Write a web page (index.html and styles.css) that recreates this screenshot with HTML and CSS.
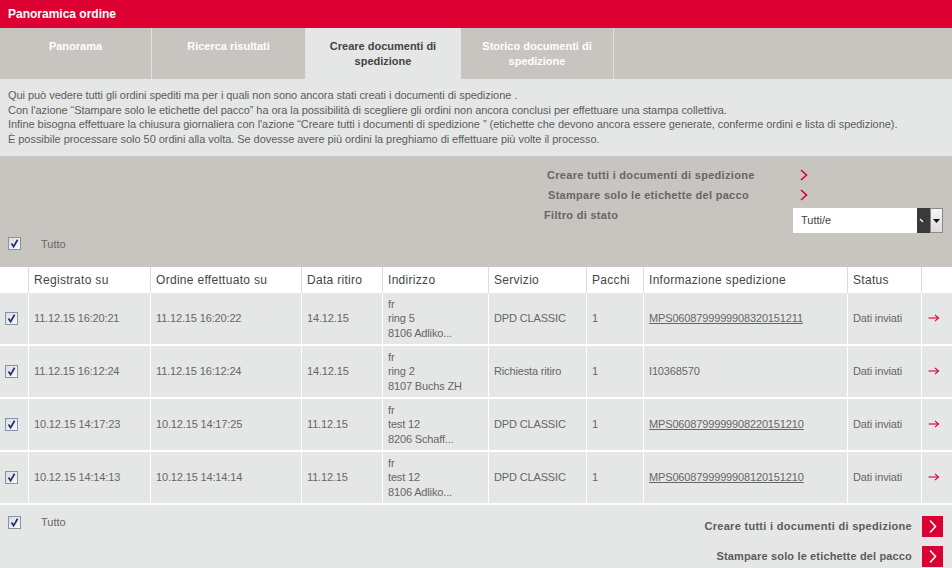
FILE: index.html
```html
<!DOCTYPE html>
<html lang="it">
<head>
<meta charset="utf-8">
<title>Panoramica ordine</title>
<link rel="stylesheet" href="styles.css">
</head>
<body>
<div class="page">
  <header class="titlebar">Panoramica ordine</header>
  <nav class="tabs">
    <div class="tab t1">Panorama</div>
    <div class="tab t2">Ricerca risultati</div>
    <div class="tab t3 active">Creare documenti di<br>spedizione</div>
    <div class="tab t4">Storico documenti di<br>spedizione</div>
    <div class="tab-rest"></div>
  </nav>
  <section class="intro">
    <p>Qui può vedere tutti gli ordini spediti ma per i quali non sono ancora stati creati i documenti di spedizione .</p>
    <p>Con l'azione “Stampare solo le etichette del pacco” ha ora la possibilità di scegliere gli ordini non ancora conclusi per effettuare una stampa collettiva.</p>
    <p>Infine bisogna effettuare la chiusura giornaliera con l'azione “Creare tutti i documenti di spedizione ” (etichette che devono ancora essere generate, conferme ordini e lista di spedizione).</p>
    <p>È possibile processare solo 50 ordini alla volta. Se dovesse avere più ordini la preghiamo di effettuare più volte il processo.</p>
  </section>
  <section class="actions">
    <div class="act-list">
      <div class="act-row"><span class="act-label l1">Creare tutti i documenti di spedizione</span><svg class="chev" width="8" height="12" viewBox="0 0 8 12"><polyline points="1,1 6.5,6 1,11" fill="none" stroke="#dc0032" stroke-width="1.6"/></svg></div>
      <div class="act-row"><span class="act-label l2">Stampare solo le etichette del pacco</span><svg class="chev" width="8" height="12" viewBox="0 0 8 12"><polyline points="1,1 6.5,6 1,11" fill="none" stroke="#dc0032" stroke-width="1.6"/></svg></div>
      <div class="filter-row">
        <span class="filter-label">Filtro di stato</span>
        <div class="select">
          <span class="sel-text">Tutti/e</span>
          <span class="sel-dark"><svg width="13" height="25" viewBox="0 0 13 25"><line x1="3" y1="11" x2="6" y2="14" stroke="#fff" stroke-width="1.3"/></svg></span>
          <span class="sel-btn"><svg width="11" height="23" viewBox="0 0 11 23"><polygon points="2,10 9,10 5.5,14" fill="#111"/></svg></span>
        </div>
      </div>
    </div>
    <div class="all-row">
      <span class="cb"><svg width="11" height="11" viewBox="0 0 11 11"><polyline points="2.5,5.5 4.6,8.6 8.6,1.8" fill="none" stroke="#1c2f78" stroke-width="1.7"/></svg></span>
      <span class="all-label">Tutto</span>
    </div>
  </section>
  <table class="orders">
    <colgroup>
      <col style="width:28px"><col style="width:122px"><col style="width:151px"><col style="width:81px"><col style="width:106px"><col style="width:98px"><col style="width:57px"><col style="width:204px"><col style="width:74px"><col style="width:31px">
    </colgroup>
    <thead>
      <tr>
        <th class="c0"></th>
        <th>Registrato su</th>
        <th>Ordine effettuato su</th>
        <th>Data ritiro</th>
        <th>Indirizzo</th>
        <th>Servizio</th>
        <th>Pacchi</th>
        <th>Informazione spedizione</th>
        <th>Status</th>
        <th></th>
      </tr>
    </thead>
    <tbody>
      <tr>
        <td class="c0"><span class="cb"><svg width="11" height="11" viewBox="0 0 11 11"><polyline points="2.5,5.5 4.6,8.6 8.6,1.8" fill="none" stroke="#1c2f78" stroke-width="1.7"/></svg></span></td>
        <td>11.12.15 16:20:21</td>
        <td>11.12.15 16:20:22</td>
        <td>14.12.15</td>
        <td class="addr">fr<br>ring 5<br>8106 Adliko...</td>
        <td>DPD CLASSIC</td>
        <td>1</td>
        <td><a href="#" class="trk">MPS0608799999908320151211</a></td>
        <td>Dati inviati</td>
        <td class="go"><svg width="12" height="8" viewBox="0 0 12 8"><line x1="0.5" y1="4" x2="10.5" y2="4" stroke="#dc0032" stroke-width="1.1"/><polyline points="7,0.8 10.5,4 7,7.2" fill="none" stroke="#dc0032" stroke-width="1.1"/></svg></td>
      </tr>
      <tr>
        <td class="c0"><span class="cb"><svg width="11" height="11" viewBox="0 0 11 11"><polyline points="2.5,5.5 4.6,8.6 8.6,1.8" fill="none" stroke="#1c2f78" stroke-width="1.7"/></svg></span></td>
        <td>11.12.15 16:12:24</td>
        <td>11.12.15 16:12:24</td>
        <td>14.12.15</td>
        <td class="addr">fr<br>ring 2<br>8107 Buchs ZH</td>
        <td>Richiesta ritiro</td>
        <td>1</td>
        <td>I10368570</td>
        <td>Dati inviati</td>
        <td class="go"><svg width="12" height="8" viewBox="0 0 12 8"><line x1="0.5" y1="4" x2="10.5" y2="4" stroke="#dc0032" stroke-width="1.1"/><polyline points="7,0.8 10.5,4 7,7.2" fill="none" stroke="#dc0032" stroke-width="1.1"/></svg></td>
      </tr>
      <tr>
        <td class="c0"><span class="cb"><svg width="11" height="11" viewBox="0 0 11 11"><polyline points="2.5,5.5 4.6,8.6 8.6,1.8" fill="none" stroke="#1c2f78" stroke-width="1.7"/></svg></span></td>
        <td>10.12.15 14:17:23</td>
        <td>10.12.15 14:17:25</td>
        <td>11.12.15</td>
        <td class="addr">fr<br>test 12<br>8206 Schaff...</td>
        <td>DPD CLASSIC</td>
        <td>1</td>
        <td><a href="#" class="trk">MPS0608799999908220151210</a></td>
        <td>Dati inviati</td>
        <td class="go"><svg width="12" height="8" viewBox="0 0 12 8"><line x1="0.5" y1="4" x2="10.5" y2="4" stroke="#dc0032" stroke-width="1.1"/><polyline points="7,0.8 10.5,4 7,7.2" fill="none" stroke="#dc0032" stroke-width="1.1"/></svg></td>
      </tr>
      <tr>
        <td class="c0"><span class="cb"><svg width="11" height="11" viewBox="0 0 11 11"><polyline points="2.5,5.5 4.6,8.6 8.6,1.8" fill="none" stroke="#1c2f78" stroke-width="1.7"/></svg></span></td>
        <td>10.12.15 14:14:13</td>
        <td>10.12.15 14:14:14</td>
        <td>11.12.15</td>
        <td class="addr">fr<br>test 12<br>8106 Adliko...</td>
        <td>DPD CLASSIC</td>
        <td>1</td>
        <td><a href="#" class="trk">MPS0608799999908120151210</a></td>
        <td>Dati inviati</td>
        <td class="go"><svg width="12" height="8" viewBox="0 0 12 8"><line x1="0.5" y1="4" x2="10.5" y2="4" stroke="#dc0032" stroke-width="1.1"/><polyline points="7,0.8 10.5,4 7,7.2" fill="none" stroke="#dc0032" stroke-width="1.1"/></svg></td>
      </tr>
    </tbody>
  </table>
  <section class="bottom">
    <div class="all-row b">
      <span class="cb"><svg width="11" height="11" viewBox="0 0 11 11"><polyline points="2.5,5.5 4.6,8.6 8.6,1.8" fill="none" stroke="#1c2f78" stroke-width="1.7"/></svg></span>
      <span class="all-label">Tutto</span>
    </div>
    <div class="btns">
      <a href="#" class="btn"><span>Creare tutti i documenti di spedizione</span><span class="sq"><svg width="21" height="21" viewBox="0 0 21 21"><polyline points="8,4.5 13.5,10.5 8,16.5" fill="none" stroke="#fff" stroke-width="1.6"/></svg></span></a>
      <a href="#" class="btn"><span>Stampare solo le etichette del pacco</span><span class="sq"><svg width="21" height="21" viewBox="0 0 21 21"><polyline points="8,4.5 13.5,10.5 8,16.5" fill="none" stroke="#fff" stroke-width="1.6"/></svg></span></a>
    </div>
  </section>
</div>
</body>
</html>
```
FILE: styles.css
```css
* { box-sizing: border-box; }
html, body { margin: 0; padding: 0; }
body {
  font-family: "Liberation Sans", Arial, sans-serif;
  font-size: 11px;
  color: #5c5c5c;
  background: #e5e6e6;
}
.page { width: 952px; height: 568px; overflow: hidden; }

.titlebar {
  height: 28px;
  background: #dc0032;
  color: #fff;
  font-weight: bold;
  font-size: 12px;
  line-height: 28px;
  padding-left: 8px;
}

.tabs {
  display: flex;
  height: 51px;
  background: #c8c4c0;
}
.tab {
  padding-top: 11px;
  text-align: center;
  font-weight: bold;
  font-size: 11px;
  line-height: 15px;
  color: #fff;
  border-right: 1px solid #e3e1de;
}
.t1 { width: 152px; }
.t2 { width: 154px; }
.t3 { width: 155px; }
.t4 { width: 153px; }
.tab.active { background: #e5e6e6; color: #444; border-right-color: #e5e6e6; }
.tab-rest { flex: 1; }

.intro {
  padding: 9px 8px 9px 8px;
  line-height: 14.7px;
  color: #5c5c5c;
  letter-spacing: -0.05px;
}
.intro p { margin: 0; white-space: nowrap; }

.actions {
  background: #c8c4c0;
  padding: 9px 0 13px 0;
  height: 111px;
}
.act-list { margin-left: 544px; }
.act-row {
  display: flex;
  align-items: center;
  height: 20px;
}
.act-label {
  width: 256px;
  font-weight: bold;
  color: #666;
  letter-spacing: 0.3px;
}
.l1 { padding-left: 3px; }
.l2 { padding-left: 4px; }
.chev { display: block; }
.filter-row {
  display: flex;
  align-items: flex-start;
}
.filter-label {
  width: 249px;
  font-weight: bold;
  color: #666;
  line-height: 20px;
  letter-spacing: 0.3px;
}
.select {
  margin-top: 3px;
  width: 150px;
  height: 25px;
  background: #fff;
  display: flex;
}
.sel-text {
  flex: 1;
  padding-left: 8px;
  line-height: 25px;
  color: #444;
}
.sel-dark { width: 13px; background: #3a3a3a; }
.sel-dark svg, .sel-btn svg { display: block; }
.sel-btn {
  width: 13px;
  height: 25px;
  border: 1px solid #8a8a8a;
  background: linear-gradient(#f4f4f4, #dcdcdc);
}

.all-row {
  display: flex;
  align-items: center;
  height: 20px;
  margin-top: 1px;
  padding-left: 8px;
}
.all-label { margin-left: 20px; color: #666; }

.cb {
  display: inline-block;
  width: 13px;
  height: 13px;
  border: 1px solid #8494ad;
  background: linear-gradient(135deg, #dcdcdc, #fafafa);
}
.cb svg { display: block; }

.orders {
  width: 952px;
  table-layout: fixed;
  border-collapse: separate;
  border-spacing: 0;
}
.orders th {
  height: 26px;
  background: #fff;
  text-align: left;
  font-weight: normal;
  font-size: 12px;
  color: #454545;
  padding: 0 0 0 5px;
  border-left: 1px solid #dcdcdc;
  white-space: nowrap;
  letter-spacing: 0.3px;
}
.orders th.c0 { border-left: 0; }
.orders tbody tr { height: 53px; }
.orders td {
  background: #e5e6e6;
  padding: 0 0 0 5px;
  border-left: 1px solid #fff;
  border-bottom: 2px solid #fff;
  vertical-align: middle;
  color: #666;
  white-space: nowrap;
  letter-spacing: -0.15px;
}
.orders td.c0 { border-left: 0; padding-left: 5px; }
.orders td.c0 .cb { display: block; }
.orders td.addr { line-height: 14.5px; }
.orders td.go { padding-left: 6px; }
.orders td.go svg { display: block; }
.trk { color: #666; text-decoration: underline; }

.bottom {
  display: flex;
  justify-content: space-between;
  align-items: flex-start;
  padding: 0 9px 0 0;
}
.all-row.b { margin-top: 11px; height: 13px; }
.btns {
  display: flex;
  flex-direction: column;
  align-items: flex-end;
  gap: 9px;
  padding-top: 11px;
}
.btn {
  display: flex;
  align-items: center;
  gap: 10px;
  font-weight: bold;
  color: #5c5c5c;
  text-decoration: none;
  letter-spacing: 0.3px;
}
.btn:last-child { letter-spacing: 0.15px; }
.sq {
  width: 21px;
  height: 21px;
  background: #dc0032;
}
.sq svg { display: block; }
```
